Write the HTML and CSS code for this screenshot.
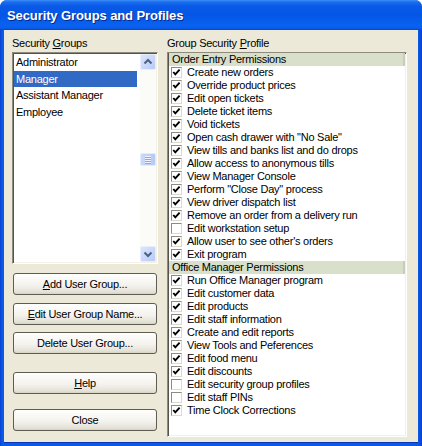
FILE: index.html
```html
<!DOCTYPE html>
<html lang="en">
<head>
  <meta charset="UTF-8">
  <title>Security Groups and Profiles</title>
  <link rel="stylesheet" href="styles.css">
</head>
<body>
  <div class="window">
    <div class="titlebar">
      <span class="title">Security Groups and Profiles</span>
    </div>

    <div class="client">
      <div class="left-col">
        <div class="label">Security <u>G</u>roups</div>
        <div class="listbox groups">
          <div class="group-items" id="group-items"></div>
          <div class="vscroll">
            <div class="sb-btn">
              <svg width="14" height="14" viewBox="0 0 14 14"><polyline points="3.5,8.5 7,5 10.5,8.5" fill="none" stroke="#4d6185" stroke-width="2"/></svg>
            </div>
            <div class="sb-track">
              <div class="sb-thumb"><span></span><span></span><span></span><span></span></div>
            </div>
            <div class="sb-btn">
              <svg width="14" height="14" viewBox="0 0 14 14"><polyline points="3.5,5.5 7,9 10.5,5.5" fill="none" stroke="#4d6185" stroke-width="2"/></svg>
            </div>
          </div>
        </div>

        <div class="buttons">
          <button class="btn btn-add"><u>A</u>dd User Group...</button>
          <button class="btn btn-edit"><u>E</u>dit User Group Name...</button>
          <button class="btn btn-delete">Delete User Group...</button>
          <button class="btn btn-help"><u>H</u>elp</button>
          <button class="btn btn-close">Close</button>
        </div>
      </div>

      <div class="right-col">
        <div class="label">Group Security <u>P</u>rofile</div>
        <div class="listbox profile" id="profile"></div>
      </div>
    </div>
  </div>

  <script>
    const groups = ["Administrator", "Manager", "Assistant Manager", "Employee"];
    const selectedGroup = "Manager";

    const sections = [
      {
        title: "Order Entry Permissions",
        items: [
          ["Create new orders", true],
          ["Override product prices", true],
          ["Edit open tickets", true],
          ["Delete ticket items", true],
          ["Void tickets", true],
          ["Open cash drawer with \"No Sale\"", true],
          ["View tills and banks list and do drops", true],
          ["Allow access to anonymous tills", true],
          ["View Manager Console", true],
          ["Perform \"Close Day\" process", true],
          ["View driver dispatch list", true],
          ["Remove an order from a delivery run", true],
          ["Edit workstation setup", false],
          ["Allow user to see other's orders", true],
          ["Exit program", true]
        ]
      },
      {
        title: "Office Manager Permissions",
        items: [
          ["Run Office Manager program", true],
          ["Edit customer data", true],
          ["Edit products", true],
          ["Edit staff information", true],
          ["Create and edit reports", true],
          ["View Tools and Peferences", true],
          ["Edit food menu", true],
          ["Edit discounts", true],
          ["Edit security group profiles", false],
          ["Edit staff PINs", false],
          ["Time Clock Corrections", true]
        ]
      }
    ];

    const groupList = document.getElementById("group-items");
    groups.forEach(name => {
      const div = document.createElement("div");
      div.className = "group-item" + (name === selectedGroup ? " selected" : "");
      div.textContent = name;
      groupList.appendChild(div);
    });

    const checkSvg = `<svg width="9" height="9" viewBox="0 0 9 9"><polyline points="1.3,4 3.3,6.3 7.6,1.6" fill="none" stroke="#000" stroke-width="1.9"/></svg>`;

    const profile = document.getElementById("profile");
    sections.forEach(section => {
      const head = document.createElement("div");
      head.className = "section-head";
      head.textContent = section.title;
      profile.appendChild(head);

      section.items.forEach(([label, checked]) => {
        const row = document.createElement("div");
        row.className = "perm-row";
        const box = document.createElement("span");
        box.className = "check";
        if (checked) box.innerHTML = checkSvg;
        const text = document.createElement("span");
        text.textContent = label;
        row.appendChild(box);
        row.appendChild(text);
        profile.appendChild(row);
      });
    });
  </script>
</body>
</html>
```

FILE: styles.css
```css
body {
  margin: 0;
  padding: 0;
  background: #ffffff;
  font-family: "Liberation Sans", Arial, sans-serif;
  font-size: 11px;
  letter-spacing: -0.25px;
  color: #000;
}

.window {
  width: 422px;
  height: 446px;
  display: flex;
  flex-direction: column;
  background: linear-gradient(to right, #0a3fd0 0, #0a5ae8 2px, #0a5ae8 418px, #0a3fd0 100%);
  border-radius: 7px 7px 0 0;
  overflow: hidden;
}

.titlebar {
  height: 30px;
  flex-shrink: 0;
  display: flex;
  align-items: center;
  padding-left: 7px;
  background: linear-gradient(to bottom, #3d8ff7 0, #1c6ef0 2px, #0a5ae6 6px, #0556e6 50%, #0a62f0 86%, #0a5de9 94%, #0444cc 100%);
}

.title {
  color: #ffffff;
  font-size: 13px;
  font-weight: bold;
  letter-spacing: -0.1px;
  text-shadow: 1px 1px 0 #0a2a8a;
  margin-top: 1px;
}

.client {
  flex: 1;
  margin: 0 4px 4px;
  background: #ece9d8;
  display: flex;
  gap: 9px;
  padding: 7px 11px 5px 8px;
  box-shadow: 0 1px 0 #0436b8;
}

.left-col {
  width: 146px;
  display: flex;
  flex-direction: column;
}

.right-col {
  flex: 1;
  display: flex;
  flex-direction: column;
}

.label {
  line-height: 13px;
  margin-bottom: 2px;
}

.listbox {
  background: #ffffff;
  border: 1px solid;
  border-color: #8e8b7e #ffffff #ffffff #8e8b7e;
  box-shadow: inset 1px 1px 0 #55534b, inset -1px -1px 0 #f3f1e7;
}

/* left list with its scrollbar */
.groups {
  height: 212px;
  box-sizing: border-box;
  padding: 1px;
  display: flex;
}

.group-items {
  flex: 1;
  padding-right: 3px;
}

.group-item {
  height: 16.7px;
  line-height: 16.7px;
  padding-left: 2px;
  white-space: nowrap;
}

.group-item.selected {
  background: #316ac5;
  color: #ffffff;
}

.vscroll {
  width: 16px;
  display: flex;
  flex-direction: column;
  background: #fbfbf8;
}

.sb-btn {
  height: 16px;
  box-sizing: border-box;
  border: 1px solid #e6edfd;
  border-radius: 2px;
  background: linear-gradient(to bottom right, #dbe6fd, #b8cbf7);
  display: flex;
  align-items: center;
  justify-content: center;
}

.sb-track {
  flex: 1;
}

.sb-thumb {
  margin-top: 83px;
  height: 13px;
  box-sizing: border-box;
  border: 1px solid #e2eafd;
  border-radius: 2px;
  background: linear-gradient(to right, #c9d8fc, #b6c9f6);
  display: flex;
  flex-direction: column;
  align-items: center;
  justify-content: center;
  gap: 1px;
}

.sb-thumb span {
  width: 6px;
  height: 1px;
  background: #eef3fe;
  box-shadow: 0 1px 0 #8fa8de;
}

.buttons {
  display: flex;
  flex-direction: column;
  margin-top: 9px;
  padding-left: 1px;
}

.btn {
  height: 22px;
  width: 144px;
  padding: 0;
  font-family: inherit;
  font-size: 11px;
  letter-spacing: -0.25px;
  color: #000;
  border: 1px solid #5e5c55;
  border-radius: 3px;
  background: linear-gradient(to bottom, #fefefd 0, #f4f3ee 55%, #e4e1d6 90%, #d6d2c2 100%);
  cursor: pointer;
}

.btn-edit { margin-top: 8px; }
.btn-delete { margin-top: 7px; }
.btn-help { margin-top: 18px; }
.btn-close { margin-top: 15px; }

/* permission list */
.profile {
  height: 385px;
  box-sizing: border-box;
  padding: 0 1px;
}

.section-head {
  height: 13px;
  line-height: 13px;
  padding-left: 3px;
  background: #d8dfcb;
  box-shadow: inset -2px 0 0 #c6ceb8;
}

.perm-row {
  height: 13px;
  line-height: 13px;
  display: flex;
  align-items: center;
  padding-left: 2px;
  white-space: nowrap;
}

.check {
  width: 11px;
  height: 11px;
  box-sizing: border-box;
  margin-right: 5px;
  border: 1px solid;
  border-color: #8d8b82 #dcd9cd #dcd9cd #8d8b82;
  background: #ffffff;
  display: flex;
  align-items: center;
  justify-content: center;
  flex-shrink: 0;
}
```
